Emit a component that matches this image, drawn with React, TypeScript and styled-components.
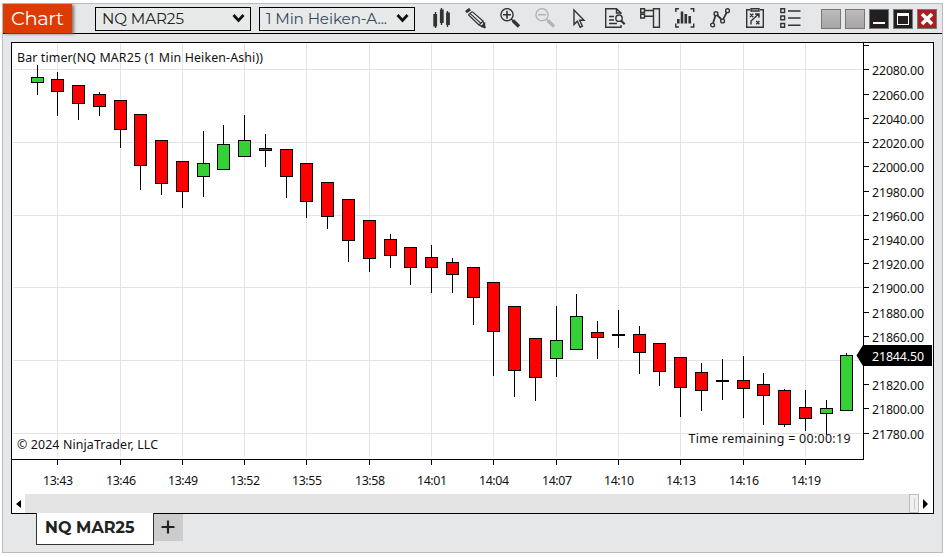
import React from "react";
import styled, { createGlobalStyle, css } from "styled-components";

const Global = createGlobalStyle`
  * { box-sizing: border-box; }
  body { margin: 0; background: #fff; overflow: hidden; }
`;

const ui = `Montserrat, "Noto Sans", sans-serif`;

const Page = styled.div`
  width: 945px;
  height: 557px;
  padding: 3px 2px 4px 2px;
  background: #fff;
  font-family: "Noto Sans", sans-serif;
`;
const Window = styled.div`
  height: 550px;
  display: flex;
  flex-direction: column;
  background: #e6e7e9;
  border: 1px solid #b9bbbd;
`;
const TitleBar = styled.header`
  height: 30px;
  flex: none;
  display: flex;
  align-items: center;
  border-bottom: 1px solid #000;
`;
const Brand = styled.div`
  width: 69px;
  height: 29px;
  background: #dc3c04;
  color: #fff;
  box-shadow: 2px 1px 3px #777;
  display: flex;
  align-items: center;
  padding-left: 8px;
`;
const Label = styled.svg<{ $w: number; $h: number }>`
  display: block;
  flex: none;
  width: ${(p) => p.$w}px;
  height: ${(p) => p.$h}px;
  overflow: visible;
  font-family: ${ui};
`;
const Select = styled.div<{ $gap: number }>`
  width: 156px;
  height: 24px;
  margin-left: ${(p) => p.$gap}px;
  padding: 0 5px 0 6px;
  display: flex;
  align-items: center;
  justify-content: space-between;
  border: 1px solid #000;
  background: #e8eae9;
`;
const Tools = styled.div`
  display: flex;
  margin-left: 15px;
  width: 371px;
  justify-content: space-between;
`;
const Icon = styled.svg<{ $faint?: boolean }>`
  width: 21px;
  height: 21px;
  display: block;
  fill: none;
  stroke: ${(p) => (p.$faint ? "#b4b4b4" : "#333")};
  stroke-width: 1.4;
`;
const Buttons = styled.div`
  display: flex;
  gap: 4px;
  margin-left: 20px;
`;
const WinButton = styled.div<{ $kind: "blank" | "dark" | "close" }>`
  width: 20px;
  height: 20px;
  border: 1px solid #77787b;
  ${(p) =>
    p.$kind === "blank"
      ? css`background: linear-gradient(#bcb9b9, #a9a6a6);`
      : p.$kind === "dark"
        ? css`background: #231f20;`
        : css`background: #aa1e23;`}
  svg { display: block; }
`;
const Panel = styled.main`
  width: 923px;
  height: 472px;
  flex: none;
  margin: 8px 0 0 8px;
  border: 1px solid #000;
  background: #fff;
  display: flex;
  flex-direction: column;
`;
const Plot = styled.svg`
  display: block;
  flex: none;
  width: 921px;
  height: 451px;
  font-family: "Noto Sans", sans-serif;
  font-size: 12.4px;
`;
const ScrollBar = styled.div`
  height: 19px;
  display: flex;
  margin-right: 1px;
  background: #e4e4e4;
  justify-content: space-between;
`;
const ScrollEnd = styled.div`
  display: flex;
`;
const Arrow = styled.div`
  width: 13px;
  height: 19px;
  background: #fff;
  display: flex;
  align-items: center;
  justify-content: center;
`;
const Thumb = styled.div`
  width: 10px;
  height: 19px;
  border: 1px solid #bcbcbc;
  background: #f0f0f0;
  display: flex;
  align-items: center;
  justify-content: center;
  &::after { content: ""; width: 1px; height: 12px; background: #ccc; }
`;
const Tabs = styled.nav`
  display: flex;
  align-items: flex-start;
  margin: -1px 0 0 33px;
`;
const Tab = styled.div`
  width: 118px;
  height: 32px;
  padding: 0 0 4px 8px;
  display: flex;
  align-items: center;
  background: #fff;
  border: solid #333;
  border-width: 0 1px 1px;
`;
const AddTab = styled.div`
  width: 29px;
  height: 27px;
  margin-top: 1px;
  padding: 0 2px 1px 0;
  background: #ccc;
  display: flex;
  align-items: center;
  justify-content: center;
`;

/* centre x, high, body top, body bottom, low, direction */
type Bar = [number, number, number, number, number, "u" | "d"];
const bars: Bar[] = [
  [37, 65, 77, 83, 95, "u"], [57, 72, 79, 92, 116, "d"], [78, 85, 85, 104, 120, "d"],
  [99, 92, 94, 107, 116, "d"], [120, 100, 100, 130, 148, "d"], [140, 114, 114, 166, 190, "d"],
  [161, 140, 140, 184, 195, "d"], [182, 161, 161, 192, 208, "d"], [203, 131, 163, 177, 197, "u"],
  [223, 125, 144, 170, 170, "u"], [244, 115, 140, 157, 157, "u"], [265, 134, 148, 151, 167, "d"],
  [286, 149, 149, 177, 198, "d"], [306, 163, 163, 202, 218, "d"], [327, 182, 182, 217, 229, "d"],
  [348, 199, 199, 241, 262, "d"], [369, 220, 220, 259, 272, "d"], [390, 234, 239, 256, 268, "d"],
  [410, 247, 247, 268, 285, "d"], [431, 245, 257, 268, 293, "d"], [452, 258, 262, 275, 293, "d"],
  [473, 267, 267, 298, 325, "d"], [493, 282, 282, 332, 376, "d"], [514, 306, 306, 371, 397, "d"],
  [535, 338, 338, 378, 401, "d"], [556, 306, 340, 359, 377, "u"], [576, 294, 316, 350, 350, "u"],
  [597, 321, 332, 338, 359, "d"], [618, 310, 334, 336, 348, "d"], [639, 326, 334, 353, 374, "d"],
  [659, 343, 343, 372, 386, "d"], [680, 357, 357, 388, 417, "d"], [701, 363, 372, 391, 411, "d"],
  [722, 359, 380, 382, 400, "d"], [743, 356, 380, 389, 418, "d"], [763, 373, 384, 396, 425, "d"],
  [784, 389, 390, 425, 427, "d"], [805, 390, 407, 419, 431, "d"], [826, 400, 408, 414, 435, "u"],
  [846, 353, 355, 411, 411, "u"],
];
const gridX = [57, 120, 182, 244, 306, 369, 431, 493, 556, 618, 680, 743, 805];
const gridY = [69, 142, 215, 287, 360, 433];
const times = ["13:43", "13:46", "13:49", "13:52", "13:55", "13:58", "14:01", "14:04", "14:07", "14:10", "14:13", "14:16", "14:19"];
const prices = Array.from({ length: 16 }, (_, i) => 22080 - i * 20);
const tickY = (price: number) => Math.floor(69.9 + ((22080 - price) / 20) * 24.22);

function Chart() {
  return (
    <Plot viewBox="12 43 921 451">
      <g fill="#e3e3e3" shapeRendering="crispEdges">
        {gridX.map((x) => <rect key={x} x={x} y={43} width={1} height={414} />)}
        {gridY.map((y) => <rect key={y} x={13} y={y} width={849} height={1} />)}
      </g>
      <g shapeRendering="crispEdges">
        {bars.map(([x, high, top, bottom, low, dir]) => (
          <g key={x}>
            <rect x={x} y={high} width={1} height={low - high} />
            <rect x={x - 6} y={top} width={13} height={bottom - top} />
            {bottom - top > 2 && (
              <rect x={x - 5} y={top + 1} width={11} height={bottom - top - 2} fill={dir === "u" ? "#36d036" : "#f00"} />
            )}
          </g>
        ))}
        <rect x={12} y={459} width={852} height={1} />
        <rect x={863} y={43} width={1} height={417} />
        <rect x={864} y={45} width={5} height={1} />
        {gridX.map((x) => <rect key={x} x={x} y={460} width={1} height={5} />)}
        {prices.map((p) => <rect key={p} x={864} y={tickY(p)} width={5} height={1} />)}
      </g>
      <g fill="#111">
        <text x={17} y={62} textLength={246}>Bar timer(NQ MAR25 (1 Min Heiken-Ashi))</text>
        <text x={17} y={449} textLength={141}>© 2024 NinjaTrader, LLC</text>
        <text x={688.5} y={443} textLength={162}>Time remaining = 00:00:19</text>
        {times.map((t, i) => <text key={t} x={gridX[i] - 14} y={485} textLength={30}>{t}</text>)}
        {prices.filter((p) => p !== 21840).map((p) => (
          <text key={p} x={872} y={tickY(p) + 6} textLength={52}>{p}.00</text>
        ))}
      </g>
      <path d="M856.5 355.5 863 345H932V366H863Z" />
      <text x={872} y={361} textLength={52} fill="#fff">21844.50</text>
    </Plot>
  );
}

const Chevron = () => (
  <svg width="13" height="10" viewBox="0 0 13 10" fill="none" stroke="#111" strokeWidth="2.8">
    <path d="M1.5 1 6.5 6.5 11.5 1" />
  </svg>
);

function ToolIcons() {
  return (
    <Tools>
      <Icon viewBox="0 0 21 21">
        <path d="M5.5 4V20M11.5 0V17M17.5 3V19" />
        <path d="M5.2 6V18.5M11.8 1.5V15M18 4.5V17" strokeWidth="3.8" />
      </Icon>
      <Icon viewBox="0 0 21 21">
        <path d="M1 4.2 5 1" strokeWidth="3" />
        <path d="M3.4 6.8 14 17M5.2 5.6 16 15.4M7.2 3.6 18 13M3.4 6.8 7.2 3.6M14 17 18 13 20 19Z" strokeWidth="1.2" />
        <path d="M16.5 18.5 19.5 15.5V19.5Z" fill="#333" />
      </Icon>
      <Icon viewBox="0 0 21 21">
        <circle cx="7" cy="6.7" r="6.1" /><path d="M3 6.7H11M7 2.7V10.7" strokeWidth="1.6" />
        <path d="M11 10.7 13 12.7" /><path d="M12.8 12.5 19 18.4" strokeWidth="3.4" />
      </Icon>
      <Icon viewBox="0 0 21 21" $faint>
        <circle cx="7" cy="6.7" r="6.1" /><path d="M3 6.7H11" strokeWidth="1.6" />
        <path d="M11 10.7 13 12.7" /><path d="M12.8 12.5 19 18.4" strokeWidth="3.4" />
      </Icon>
      <Icon viewBox="0 0 21 21">
        <path d="M4 2V16.5L7.3 13.2 10.2 19.2 12.4 18.1 9.6 12.2H14Z" />
      </Icon>
      <Icon viewBox="0 0 21 21">
        <path d="M16 6V5L11.5.7H.7V19.3H16V17M11.5.7V5H16M4 8.5H9M4 12H9M4 15.5H12" />
        <circle cx="14" cy="10.2" r="3.2" /><path d="M16 12.5 19.7 16.2" strokeWidth="2.2" />
      </Icon>
      <Icon viewBox="0 0 21 21">
        <path d="M.7.7H4.5V4.5H.7ZM.7 6.2H4.5V10H.7ZM4.5 2.5H13.5M4.5 8.2H13.5M13.5.7H19.4V19.3H13.5Z" />
      </Icon>
      <Icon viewBox="0 0 21 21">
        <path d="M4 .8H.8V4M15.5.8H18.7V4M.8 15.5V19H4M18.7 15.5V19H15.5" />
        <path d="M3.3 11V15.5M7 3.5V15.5M10.8 6V15.5M14.7 8V15.5" strokeWidth="2.6" />
      </Icon>
      <Icon viewBox="0 0 21 21">
        <circle cx="2.6" cy="17" r="1.9" /><circle cx="6" cy="5.7" r="1.9" /><circle cx="12.6" cy="13" r="1.9" /><circle cx="17.5" cy="2.7" r="1.9" />
        <path d="M3.1 15 5.4 7.7M7.2 7.2 11.5 11.5M13.3 11.1 16.6 4.6" strokeWidth="1.8" />
      </Icon>
      <Icon viewBox="0 0 21 21">
        <path d="M5 1.7H1.7V19.3H18.3V1.7H15M6 .8H14V3H6Z" />
        <path d="M5 5.8 8.2 9M8.2 5.8 5 9M11.2 13 14.4 16.2M14.4 13 11.2 16.2M6 16.5V13L13.6 6M10 6H14V9.8" />
      </Icon>
      <Icon viewBox="0 0 21 21">
        <path d="M.8.7H4.6V4.5H.8ZM.8 8H4.6V11.8H.8ZM.8 15.5H4.6V19.3H.8ZM8 3H20.5M8 10H20.5M8 17.3H20.5" />
      </Icon>
    </Tools>
  );
}

export default function App() {
  return (
    <Page>
      <Global />
      <Window>
        <TitleBar>
          <Brand>
            <Label $w={54} $h={22}><text x="0" y="17" fontSize="19.5" textLength="53" fill="#fff">Chart</text></Label>
          </Brand>
          <Select $gap={23}>
            <Label $w={83} $h={20}><text x="0" y="14.5" fontSize="15.2" textLength="82" fill="#222">NQ MAR25</text></Label>
            <Chevron />
          </Select>
          <Select $gap={8}>
            <Label $w={122} $h={20}><text x="0" y="14.5" fontSize="15.2" textLength="121" fill="#35495e">1 Min Heiken-A...</text></Label>
            <Chevron />
          </Select>
          <ToolIcons />
          <Buttons>
            <WinButton $kind="blank" />
            <WinButton $kind="blank" />
            <WinButton $kind="dark"><svg width="18" height="18"><rect x="3" y="12" width="12" height="2" fill="#fff" /></svg></WinButton>
            <WinButton $kind="dark"><svg width="18" height="18"><path d="M3 3H15V15H3ZM4 6V14H14V6Z" fill="#fff" fillRule="evenodd" /></svg></WinButton>
            <WinButton $kind="close"><svg width="18" height="18"><path d="M4 4 14 14M14 4 4 14" stroke="#fff" strokeWidth="3.6" /></svg></WinButton>
          </Buttons>
        </TitleBar>
        <Panel>
          <Chart />
          <ScrollBar>
            <Arrow><svg width="5" height="8"><path d="M5 0V8L0 4Z" /></svg></Arrow>
            <ScrollEnd>
              <Thumb />
              <Arrow><svg width="5" height="10"><path d="M0 0V10L5 5Z" /></svg></Arrow>
            </ScrollEnd>
          </ScrollBar>
        </Panel>
        <Tabs>
          <Tab><Label $w={90} $h={20}><text x="0" y="16" fontSize="16" fontWeight="700" textLength="89.5" fill="#222">NQ MAR25</text></Label></Tab>
          <AddTab><svg width="14" height="14"><path d="M7 .5V13.5M.5 7H13.5" stroke="#222" strokeWidth="2.2" /></svg></AddTab>
        </Tabs>
      </Window>
    </Page>
  );
}
